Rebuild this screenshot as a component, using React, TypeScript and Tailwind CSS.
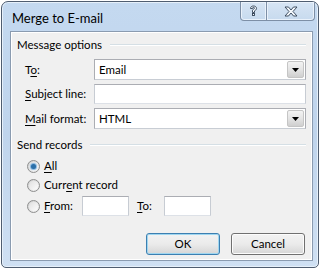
import React from 'react';

const font = { fontFamily: 'Lato, "Noto Sans", sans-serif' };

function Acc({ children }: { children: React.ReactNode }) {
  return <span className="underline underline-offset-2 decoration-1">{children}</span>;
}

function GroupHeading({ title }: { title: string }) {
  return (
    <div className="flex h-4 items-center gap-2 pl-[6px] pr-[6px]">
      <span className="whitespace-nowrap leading-none">{title}</span>
      <div className="flex-1 border-t border-b border-t-[#d5dfe5] border-b-white" />
    </div>
  );
}

function DropArrow() {
  return (
    <div className="my-[1px] mr-[1px] flex w-[17px] items-center justify-center rounded-[2px] border border-[#c5c5c5] bg-gradient-to-b from-[#f3f3f3] via-[#e4e4e4] to-[#cfcfcf]">
      <svg width="7" height="4" viewBox="0 0 7 4">
        <path d="M0 0h7L3.5 4z" fill="#000" />
      </svg>
    </div>
  );
}

function Combo({ value }: { value: string }) {
  return (
    <div className="flex h-[21px] flex-1 border border-[#abadb3] border-b-[#c8cdd4] bg-white">
      <span className="flex flex-1 items-center pl-[4px] leading-none">{value}</span>
      <DropArrow />
    </div>
  );
}

function TextBox({ className }: { className: string }) {
  return <div className={`border border-[#abadb3] border-b-[#dde1e7] border-l-[#c7ccd3] border-r-[#c7ccd3] bg-white ${className}`} />;
}

function Radio({ checked }: { checked?: boolean }) {
  return (
    <div className="flex h-[13px] w-[13px] items-center justify-center rounded-full border border-[#8e8f8f] bg-gradient-to-br from-[#d0d0d0] to-[#f6f6f6]">
      <div className="flex h-[9px] w-[9px] items-center justify-center rounded-full bg-gradient-to-br from-[#e0e0e0] to-[#fdfdfd]">
        {checked && <div className="h-[5px] w-[5px] rounded-full bg-[#2b6fa8] shadow-[0_0_1px_1px_#7fb3de]" />}
      </div>
    </div>
  );
}

function Btn({ label, primary }: { label: string; primary?: boolean }) {
  return (
    <div
      className={`flex h-[22px] w-[74px] items-center justify-center rounded-[3px] border bg-gradient-to-b from-[#f2f2f2] via-[#ebebeb] to-[#d6d6d6] leading-none ${
        primary ? 'border-[#3c7fb1] shadow-[inset_0_0_0_1px_#9fd6f0]' : 'border-[#707070] shadow-[inset_0_0_0_1px_#fcfcfc]'
      }`}
    >
      {label}
    </div>
  );
}

export default function App() {
  return (
    <div className="h-[275px] w-[323px] bg-white pl-[1px] pt-[1px] text-[11.5px] text-black" style={font}>
      <div className="flex h-[267px] w-[318px] flex-col rounded-t-[7px] rounded-b-[5px] border border-[#4f5d70] bg-gradient-to-b from-[#c4d9f0] via-[#bfd4ec] to-[#cfe0f3] shadow-[inset_0_0_0_1px_#e6f0fa]">
        <div className="flex h-[29px] items-start">
          <span className="mt-[10px] pl-[10px] text-[13px] leading-none text-black">Merge to E-mail</span>
          <div className="ml-auto mr-[3px] flex h-[19px]">
            <div className="flex w-[27px] items-center justify-center rounded-bl-[4px] border border-t-0 border-[#7d8fa6] bg-gradient-to-b from-[#d7e5f4] to-[#c7daee] shadow-[inset_0_0_0_1px_#eaf2fb]">
              <svg width="9" height="12" viewBox="0 0 9 12">
                <path d="M1.5 3.5C1.5 1.8 2.8 1 4.5 1S7.5 1.9 7.5 3.4c0 1.4-1.2 1.9-2 2.5v1.6H3.5V5.3c0-0.9 2-1.4 2-2 0-0.6-.4-1-1-1s-1 .4-1 1.2z" fill="#f4f8fc" stroke="#2f3f53" strokeWidth="0.9" />
                <rect x="3.5" y="8.5" width="2" height="2" fill="#f4f8fc" stroke="#2f3f53" strokeWidth="0.9" />
              </svg>
            </div>
            <div className="flex w-[48px] items-center justify-center rounded-br-[4px] border border-l-0 border-t-0 border-[#7d8fa6] bg-gradient-to-b from-[#d7e5f4] to-[#c7daee] shadow-[inset_0_0_0_1px_#eaf2fb]">
              <svg width="14" height="11" viewBox="0 0 14 11">
                <path d="M1 1h3.5L7 4l2.5-3H13L9 5.5 13 10H9.5L7 7l-2.5 3H1l4-4.5z" fill="#f4f8fc" stroke="#2f3f53" strokeWidth="0.9" strokeLinejoin="round" />
              </svg>
            </div>
          </div>
        </div>
        <div className="mb-[6px] ml-[8px] mr-[5px] flex flex-1 flex-col border border-[#8a9bb0] bg-[#f0f0f0] shadow-[inset_0_0_0_1px_#ffffff]">
          <div className="mt-[5px]">
            <GroupHeading title="Message options" />
          </div>
          <div className="mt-[6px] flex flex-col gap-[4px] pl-[14px] pr-[6px]">
            <div className="flex items-center">
              <span className="w-[69px]">T<Acc>o</Acc>:</span>
              <Combo value="Email" />
            </div>
            <div className="flex items-center">
              <span className="w-[69px]"><Acc>S</Acc>ubject line:</span>
              <TextBox className="h-[20px] flex-1" />
            </div>
            <div className="flex items-center">
              <span className="w-[69px]"><Acc>M</Acc>ail format:</span>
              <Combo value="HTML" />
            </div>
          </div>
          <div className="mt-[8px]">
            <GroupHeading title="Send records" />
          </div>
          <div className="mt-[4px] flex flex-col pl-[16px]">
            <div className="flex h-[18px] items-center gap-[4px]">
              <Radio checked />
              <span><Acc>A</Acc>ll</span>
            </div>
            <div className="mt-[1px] flex h-[18px] items-center gap-[4px]">
              <Radio />
              <span>Curr<Acc>e</Acc>nt record</span>
            </div>
            <div className="mt-[2px] flex h-[20px] items-center">
              <Radio />
              <span className="ml-[4px] w-[38px]"><Acc>F</Acc>rom:</span>
              <TextBox className="h-[20px] w-[47px]" />
              <span className="ml-[8px] w-[27px]"><Acc>T</Acc>o:</span>
              <TextBox className="h-[20px] w-[47px]" />
            </div>
          </div>
          <div className="mt-[17px] flex justify-end gap-[11px] pr-[7px]">
            <Btn label="OK" primary />
            <Btn label="Cancel" />
          </div>
        </div>
      </div>
    </div>
  );
}
